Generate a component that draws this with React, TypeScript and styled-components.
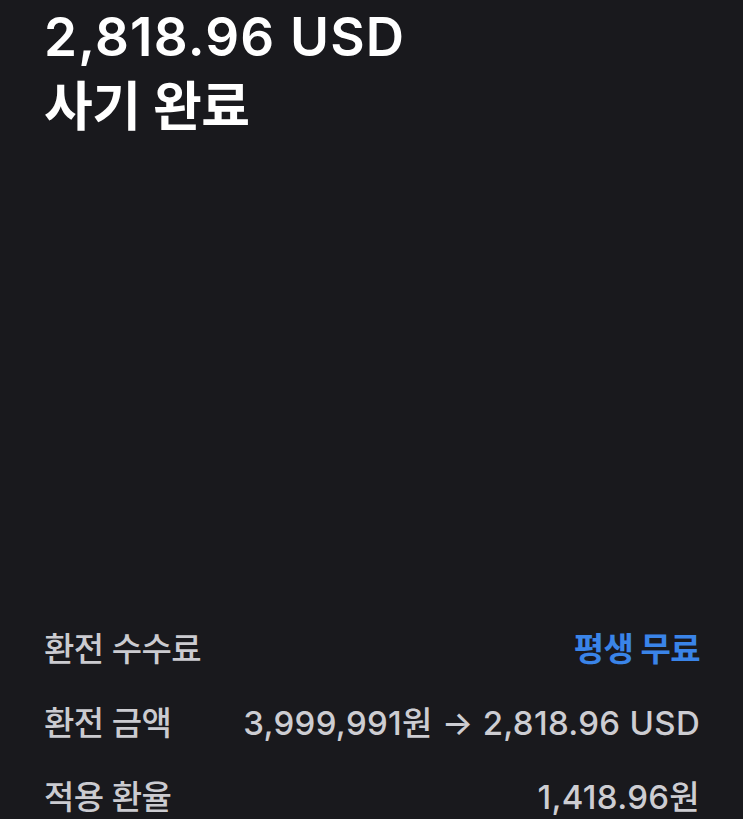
import React from "react";
import styled, { createGlobalStyle } from "styled-components";

const Global = createGlobalStyle`
  html, body { margin: 0; padding: 0; background: #19191d; }
  body { font-family: Inter, "Noto Sans CJK KR", "Noto Sans", sans-serif; }
`;

const Screen = styled.div`
  width: 743px;
  height: 819px;
  overflow: hidden;
  background: #19191d;
  display: flex;
  flex-direction: column;
  padding: 2px 43px 0 44px;
  box-sizing: border-box;
`;

const Title = styled.h1`
  margin: 0;
  color: #ffffff;
  font-size: 53px;
  line-height: 70px;
  font-weight: 600;
  display: flex;
  flex-direction: column;
`;

const TitleLine = styled.span<{ $tracking: number }>`
  letter-spacing: ${(p) => p.$tracking}px;
`;

const Details = styled.div`
  margin-top: 468px;
  display: flex;
  flex-direction: column;
`;

const Row = styled.div`
  height: 74px;
  display: flex;
  align-items: center;
  justify-content: space-between;
  font-size: 33px;
  font-weight: 500;
`;

const Label = styled.span`
  color: #cbcbd0;
  letter-spacing: -0.6px;
`;

const Value = styled.span<{ $accent?: boolean }>`
  color: ${(p) => (p.$accent ? "#3a84e8" : "#cdcdd2")};
  font-weight: ${(p) => (p.$accent ? 700 : 500)};
  letter-spacing: ${(p) => (p.$accent ? "-0.6px" : "0.3px")};
`;

export default function App() {
  return (
    <>
      <Global />
      <Screen>
        <Title>
          <TitleLine $tracking={1.2}>2,818.96 USD</TitleLine>
          <TitleLine $tracking={-0.6}>사기 완료</TitleLine>
        </Title>
        <Details>
          <Row>
            <Label>환전 수수료</Label>
            <Value $accent>평생 무료</Value>
          </Row>
          <Row>
            <Label>환전 금액</Label>
            <Value>3,999,991원 → 2,818.96 USD</Value>
          </Row>
          <Row>
            <Label>적용 환율</Label>
            <Value>1,418.96원</Value>
          </Row>
        </Details>
      </Screen>
    </>
  );
}
